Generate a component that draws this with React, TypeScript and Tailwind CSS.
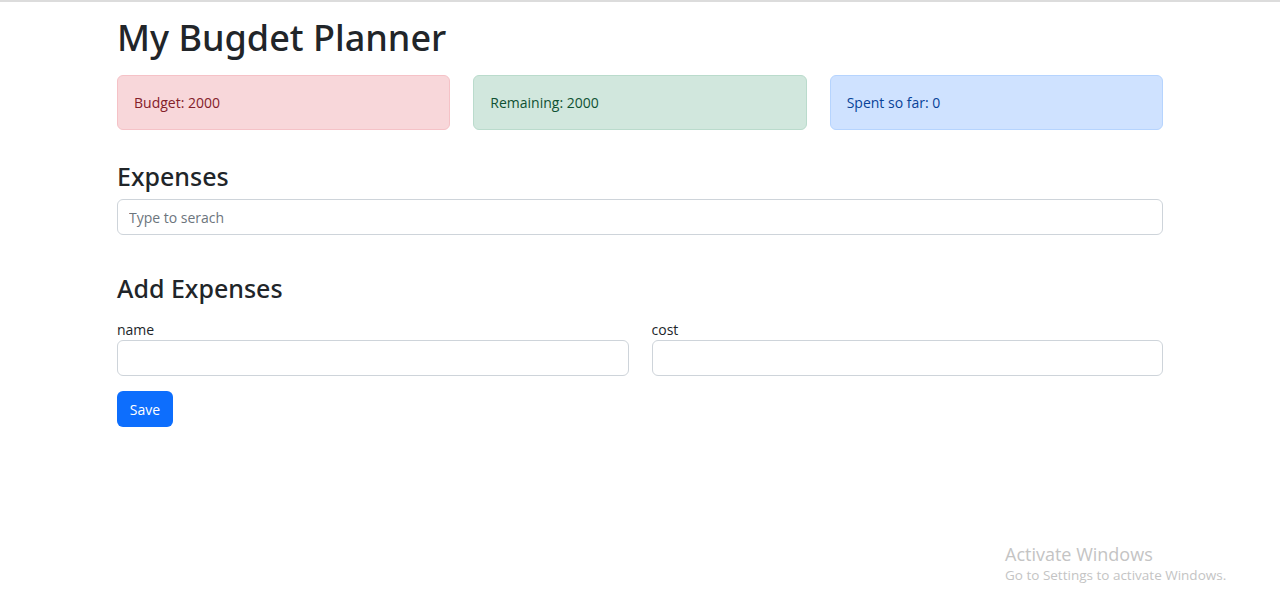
import React from "react";

export default function App() {
  return (
    <div className="relative min-h-[596px] w-full bg-white border-t-2 border-[#dcdcdc] font-['Open_Sans',sans-serif] text-[#212529]">
      <div className="ml-[117px] w-[1046px]">
        <h1 className="mt-[13px] font-['Noto_Sans',sans-serif] text-[36px] leading-[46px] font-medium">My Bugdet Planner</h1>
        <div className="mt-[14px] grid grid-cols-3 gap-[23px]">
          <div className="h-[55px] flex items-center px-[16px] rounded-[6px] border border-[#f5c2c7] bg-[#f8d7da] text-[#842029] text-[14px]">Budget: 2000</div>
          <div className="h-[55px] flex items-center px-[16px] rounded-[6px] border border-[#badbcc] bg-[#d1e7dd] text-[#0f5132] text-[14px]">Remaining: 2000</div>
          <div className="h-[55px] flex items-center px-[16px] rounded-[6px] border border-[#b6d4fe] bg-[#cfe2ff] text-[#084298] text-[14px]">Spent so far: 0</div>
        </div>
        <h3 className="mt-[29px] font-['Noto_Sans',sans-serif] text-[25px] leading-[34px] font-medium">Expenses</h3>
        <input
          className="mt-[6px] block w-full h-[36px] rounded-[6px] border border-[#ced4da] px-[11px] text-[14px] placeholder:text-[#6c757d] outline-none"
          placeholder="Type to serach"
        />
        <h3 className="mt-[36px] font-['Noto_Sans',sans-serif] text-[25px] leading-[34px] font-medium">Add Expenses</h3>
        <div className="mt-[15px] grid grid-cols-2 gap-[23px]">
          <div>
            <label className="block text-[14px] leading-[20px]">name</label>
            <input className="block w-full h-[36px] rounded-[6px] border border-[#ced4da] outline-none" />
          </div>
          <div>
            <label className="block text-[14px] leading-[20px]">cost</label>
            <input className="block w-full h-[36px] rounded-[6px] border border-[#ced4da] outline-none" />
          </div>
        </div>
        <button className="mt-[15px] h-[36px] w-[56px] rounded-[6px] bg-[#0d6efd] text-white text-[14px]">Save</button>
      </div>
      <div className="absolute left-[1005px] top-[540px] text-[#c4c4c4]">
        <div className="text-[18px] leading-[24px]">Activate Windows</div>
        <div className="text-[13.5px] leading-[18px]">Go to Settings to activate Windows.</div>
      </div>
    </div>
  );
}
